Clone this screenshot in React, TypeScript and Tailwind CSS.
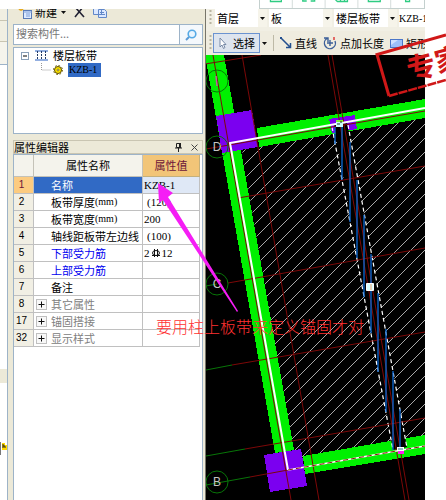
import React from 'react';

interface PropertyRow {
  id: number;
  name: string;
  unit?: string;
  value: string;
  kind?: 'selected' | 'rebar' | 'group';
}

const ROWS: PropertyRow[] = [
  { id: 1, name: '名称', value: 'KZB-1', kind: 'selected' },
  { id: 2, name: '板带厚度', unit: '(mm)', value: '(120)' },
  { id: 3, name: '板带宽度', unit: '(mm)', value: '200' },
  { id: 4, name: '轴线距板带左边线', value: '(100)' },
  { id: 5, name: '下部受力筋', value: '2⏀12', kind: 'rebar' },
  { id: 6, name: '上部受力筋', value: '', kind: 'rebar' },
  { id: 7, name: '备注', value: '' },
  { id: 8, name: '其它属性', value: '', kind: 'group' },
  { id: 17, name: '锚固搭接', value: '', kind: 'group' },
  { id: 32, name: '显示样式', value: '', kind: 'group' },
];

const AXES = [
  { label: '', y: 81 },
  { label: 'D', y: 147 },
  { label: 'C', y: 284 },
  { label: 'B', y: 482 },
];

// x, top, bottom of the rebar lines inside the strip
const STRIP_LINES = [
  [335, 127, 144],
  [342, 125, 180],
  [350, 142, 222],
  [357, 180, 258],
  [364, 215, 297],
  [371, 254, 333],
  [378, 293, 372],
  [386, 329, 412],
  [393, 371, 450],
  [400, 409, 447],
];

const HATCH = Array.from({ length: 36 }, (_, i) => 381 + i * 14);

const Caret = () => (
  <svg viewBox="0 0 5 3" className="w-[5px] h-[3px] shrink-0 pointer-events-none">
    <path d="M0 0h5L2.5 3z" fill="#111" />
  </svg>
);

const Grip = () => (
  <svg viewBox="0 0 3 16" className="w-[3px] h-4 shrink-0">
    <path d="M1.5 0v16" stroke="#b9b5a2" strokeWidth="2" strokeDasharray="2 2" />
  </svg>
);

const Combo: React.FC<{ label: string; value: string; className: string }> = ({ label, value, className }) => (
  <div className={`relative h-[18px] ${className}`}>
    <select aria-label={label} className="appearance-none block w-full h-full bg-white pl-[2px] leading-[18px] outline-none">
      <option>{value}</option>
    </select>
    <span className="absolute right-0 inset-y-0 w-[9px] bg-[#f6f4ea] flex items-center justify-center pointer-events-none">
      <Caret />
    </span>
  </div>
);

const TopIcons = () => (
  <div className="absolute top-0 left-[259px] right-[21px] h-[9px] bg-white border-b border-l border-r border-[#c4d0ce]">
    <svg viewBox="260 0 165 8" className="block w-full h-full" fill="none" stroke="#2ecc82" strokeWidth="1.3">
      <path d="M270.500 0v1.500h11V0M303 0v1h4M315 0v1h-4M336 0l2 1.500h10V0M341 0v1.500M345 0v1.500M369 0v1.500h12V0M406.500 0v1.500h4V0" />
      <path d="M292.500 0v8M325.500 0v8M358.500 0v8M391.500 0v8" stroke="#d5dddb" strokeWidth="1" />
    </svg>
  </div>
);

const LeftEdge = () => (
  <div className="w-2 shrink-0 flex flex-col bg-white border-r border-[#9db3c8]">
    <div className="h-3 bg-[#f1efe2] border-b border-[#c9c5b2]" />
    <div className="h-[21px] bg-[#f1efe2] border-b border-[#c9c5b2]" />
    <div className="h-[23px] bg-[#f5f4ec] border-b border-[#9db3c8]" />
    <div className="h-[304px]" />
    <div className="h-[14px] bg-[#ece9d8]" />
    <div className="h-[58px]" />
    <svg viewBox="0 0 7 14" className="block w-[7px] h-[14px]">
      <path d="M0 1h1v13H0z" fill="#777" />
      <path d="M2 2h3v2h2v5H2z" fill="#ffd800" />
      <path d="M3 3v4M3 5h2v2" stroke="#222" fill="none" />
    </svg>
  </div>
);

const ComponentTree = () => (
  <>
    <div className="h-4 pl-1 overflow-hidden">
      <div className="h-[6px] flex items-center">
        <button type="button" className="flex items-center whitespace-nowrap">
          <svg viewBox="0 0 16 16" className="w-4 h-4 mr-[2px]">
            <path d="M4 1v6M1 4h6M2 2l4 4M6 2l-4 4" stroke="#e5a920" strokeWidth="1.500" />
            <rect x="6.500" y="6.500" width="8" height="8" fill="#dceaff" stroke="#5a7bb5" />
            <path d="M6 8h9M9 10h4M9 12h4" stroke="#7d9ed8" />
          </svg>
          新建
          <span className="ml-1"><Caret /></span>
        </button>
        <button type="button" aria-label="删除" className="ml-2">
          <svg viewBox="0 0 11 12" className="w-[11px] h-3 block">
            <path d="M1 1l9 10M9 1L1 11" stroke="#223" strokeWidth="1.600" />
          </svg>
        </button>
        <button type="button" aria-label="复制" className="ml-2">
          <svg viewBox="0 0 14 12" className="w-[14px] h-3 block">
            <path d="M.500 .500h8v8h-8zM5.500 3.500h6l2 2v6h-8z" fill="#dbe8ff" stroke="#6288c8" />
            <path d="M7 6.500h4M7 8.500h5" stroke="#6288c8" />
          </svg>
        </button>
      </div>
    </div>

    <div className="h-[21px] mt-[-1px] flex bg-white border border-[#9db3c8]">
      <input type="text" aria-label="搜索构件" placeholder="搜索构件..." className="flex-1 min-w-0 pl-[2px] pb-[2px] outline-none placeholder:text-[#777]" />
      <button type="button" aria-label="搜索" className="w-[23px] flex items-center justify-center border-l border-[#9db3c8] bg-[#f4f8fc]">
        <svg viewBox="0 0 12 12" className="w-3 h-3" fill="none">
          <path d="M1 11l3-3" stroke="#5b9bd5" strokeWidth="2" />
          <circle cx="7" cy="5" r="3.800" fill="#e8f5ff" stroke="#55a9e5" strokeWidth="1.600" />
        </svg>
      </button>
    </div>

    <div className="h-[87px] mt-[2px] pl-[7px] bg-white border border-[#9db3c8]">
      <div className="h-[15px] flex items-center">
        <svg viewBox="0 0 8 8" className="w-2 h-2 mr-[6px]">
          <rect x=".500" y=".500" width="7" height="7" fill="#fff" stroke="#8aa0b8" />
          <path d="M2 4h4" stroke="#000" />
        </svg>
        <svg viewBox="0 0 13 11" className="w-[13px] h-[11px] mr-[5px]">
          <path d="M0 1h13M0 10h13" stroke="#7095d6" strokeWidth="1.500" />
          <path d="M2.500 1v9M6.500 1v9M10.500 1v9" stroke="#223a66" strokeDasharray="2 1" />
        </svg>
        楼层板带
      </div>
      <div className="h-[14px] pl-5 flex items-center">
        <svg viewBox="0 0 22 14" className="w-[22px] h-[14px] mr-[5px]" fill="none">
          <path d="M.500 0v7H10" stroke="#999" strokeDasharray="1 1" />
          <circle cx="17" cy="7" r="3.500" fill="#ffe600" stroke="#5a4a00" />
          <circle cx="17" cy="7" r="4.500" stroke="#6b5b00" strokeDasharray="1.700 1.830" />
          <circle cx="17" cy="7" r="1" fill="#fff" stroke="#5a4a00" strokeWidth=".700" />
        </svg>
        <span className="w-[33px] h-[14px] leading-[14px] pl-[1px] bg-[#316ac5] font-['Liberation_Serif'] text-[10px]">KZB-1</span>
      </div>
    </div>
  </>
);

const PropertyEditor = () => (
  <>
    <div className="h-[14px] mt-[6px] pr-1 flex items-center border border-[#c9c5b2] bg-[#ece9d8] leading-3">
      <h2 className="flex-1">属性编辑器</h2>
      <button type="button" aria-label="固定" className="mr-[9px]">
        <svg viewBox="0 0 7 9" className="block w-[7px] h-[9px]" fill="none" stroke="#222">
          <path d="M1.500 .500h3v4h-3zM0 5h7M3.500 5v4" />
          <path d="M5 0v5" strokeWidth="2" />
        </svg>
      </button>
      <button type="button" aria-label="关闭">
        <svg viewBox="0 0 7 7" className="block w-[7px] h-[7px]" stroke="#444">
          <path d="M.500 .500l6 6M6.500 .500l-6 6" />
        </svg>
      </button>
    </div>
    <div className="flex-1 bg-white border-x border-t border-[#9db3c8] pr-[2px]">
      <table className="w-full table-fixed border-separate border-spacing-0">
        <colgroup>
          <col className="w-5" />
          <col className="w-[109px]" />
          <col />
        </colgroup>
        <thead>
          <tr className="h-[22px]">
            <th className="border-r border-b border-[#c4c2b8] bg-[#f4f3ec] p-0" />
            <th className="border-r border-b border-[#c4c2b8] bg-[#f4f3ec] p-0 font-normal">属性名称</th>
            <th className="border-r border-b border-[#c4b07c] bg-[#f2c578] p-0 font-normal text-[#6b1438]">属性值</th>
          </tr>
        </thead>
        <tbody>
          {ROWS.map(({ id, name, unit, value, kind }) => {
            const selected = kind === 'selected';
            let color = 'text-black';
            if (selected) color = 'bg-[#316ac5] text-white';
            if (kind === 'rebar') color = 'text-[#0000f0]';
            if (kind === 'group') color = 'text-[#808080]';
            return (
              <tr key={id} className="h-[17px] leading-4">
                <td className={`border-r border-b border-[#c0c0c0] p-0 pr-1 text-center font-['Liberation_Sans'] text-[10px] ${selected ? 'bg-[#fccb80] text-[#6b1438]' : 'bg-[#f1efe4]'}`}>{id}</td>
                <td className={`border-r border-b border-[#c0c0c0] p-0 whitespace-nowrap ${color}`}>
                  <div className="flex items-center h-4">
                    <span className="w-[17px] shrink-0 pl-[2px]">
                      {kind === 'group' && (
                        <button type="button" aria-label={name} className="block">
                          <svg viewBox="0 0 11 11" className="block w-[11px] h-[11px]">
                            <rect x=".500" y=".500" width="10" height="10" fill="#f8f8f8" stroke="#c0c0c0" />
                            <path d="M2.500 5.500h6M5.500 2.500v6" stroke="#111" />
                          </svg>
                        </button>
                      )}
                    </span>
                    {name}
                    {unit && <span className="font-['Liberation_Serif'] text-[10px]">{unit}</span>}
                  </div>
                </td>
                <td className={`border-r border-b border-[#c0c0c0] p-0 font-['Liberation_Serif'] text-[11px] whitespace-nowrap ${selected ? 'bg-[#dfe8f6] text-[10px]' : ''}`}>
                  <div className={`h-4 flex items-center ${value.startsWith('(') ? 'pl-1' : 'pl-[1px]'}`}>
                    {id === 5 ? (
                      <>
                        <span>2</span>
                        <svg viewBox="0 0 10 10" className="w-[10px] h-[10px] mx-[1px]" fill="none" stroke="#111">
                          <ellipse cx="5" cy="5" rx="3.500" ry="2.500" />
                          <path d="M3.500 1v8M6.500 1v8M1 7.500h8" />
                        </svg>
                        <span>12</span>
                      </>
                    ) : value}
                  </div>
                </td>
              </tr>
            );
          })}
        </tbody>
      </table>
    </div>
  </>
);

const Toolbars = () => (
  <div className="h-[46px] shrink-0 overflow-hidden bg-[#ece9d8]">
    <div className="h-[22px] flex items-center gap-[2px] pl-[3px] pb-1 bg-[#f1efe4]">
      <div className="w-[3px] mr-[1px]"><Grip /></div>
      <Combo label="楼层" value="首层" className="w-[52px] shrink-0" />
      <Combo label="构件类别" value="板" className="w-[63px] shrink-0" />
      <Combo label="构件类型" value="楼层板带" className="w-[63px] shrink-0" />
      <input aria-label="构件名称" defaultValue="KZB-1" className="flex-1 min-w-0 h-[18px] bg-white font-['Liberation_Serif'] text-[10px]" />
    </div>
    <div className="h-6 pl-[3px] flex items-center whitespace-nowrap bg-[#efecdf]">
      <Grip />
      <button type="button" className="ml-[1px] w-[47px] h-5 shrink-0 flex items-center justify-end pr-1 gap-[6px] border border-[#6b93d0] bg-[#dde4ee]">
        <svg viewBox="0 0 8 12" className="w-2 h-3">
          <path d="M1 1v9l2-2 1.500 3.500 1.500-1L4.500 7.500H7z" fill="#fff" stroke="#6b7f9e" strokeWidth=".900" />
        </svg>
        选择
      </button>
      <button type="button" aria-label="选择方式" className="ml-[2px]"><Caret /></button>
      <span className="w-px h-4 ml-[6px] shrink-0 bg-[#bdb9a6]" />
      <button type="button" className="ml-[6px] shrink-0 flex items-center gap-[3px]">
        <svg viewBox="0 0 12 12" className="w-3 h-3" fill="none">
          <path d="M1 1l9 9M10.500 6v4.500H6" stroke="#234f8f" strokeWidth="1.500" />
          <path d="M0 0h2v2H0z" fill="#234f8f" />
        </svg>
        直线
      </button>
      <button type="button" className="ml-[6px] shrink-0 flex items-center gap-[3px]">
        <svg viewBox="0 0 14 14" className="w-[14px] h-[14px]" fill="none" stroke="#3c5f99" strokeWidth="1.400">
          <path d="M4 2.500A5.500 5.500 0 1 0 12 5M1 2h4v4M7 4v6M4 7h6" />
          <path d="M11 1v3" stroke="#d33" />
        </svg>
        点加长度
      </button>
      <button type="button" className="ml-[6px] shrink-0 flex items-center gap-[3px]">
        <svg viewBox="0 0 13 9" className="w-[13px] h-[9px]">
          <rect x=".500" y=".500" width="12" height="8" fill="#9cc0fa" stroke="#4a76c8" />
          <path d="M1 1h7L1 6z" fill="#cfe1ff" />
        </svg>
        矩形
      </button>
    </div>
  </div>
);

const DrawingArea = () => (
  <svg viewBox="206 55 219 445" preserveAspectRatio="xMinYMin slice" className="block w-full flex-1 min-h-0 bg-black" fill="none">
    <defs>
      <clipPath id="slab">
        <path d="M242 150L425 118V436L302 457L292 449z" />
      </clipPath>
    </defs>

    <g clipPath="url(#slab)" stroke="#a8a8a8" strokeWidth="1">
      {HATCH.map(sum => (
        <path key={sum} d={`M${sum - 500} 500L${sum - 100} 100`} />
      ))}
    </g>

    <g fill="#00f000" shapeRendering="crispEdges">
      <path d="M205 55H224L294 450L275 453z" />
      <path d="M257 128L425 99V118L259 147z" />
      <path d="M303 456L425 435V454L305 474z" />
    </g>
    <g fill="#7b00f0" shapeRendering="crispEdges">
      <path d="M216 116L252 110L258 147L222 153z" />
      <path d="M264 455L301 449L307 486L270 492z" />
      <path d="M329 119L355 115L357 129L332 133z" />
    </g>

    <path d="M334 125L347 123L407 447L393 450z" fill="#000" />
    <path d="M332 127L393 450M348 125L407 448" stroke="#fff" strokeWidth="1.200" strokeDasharray="4 3" />

    <g stroke="#7c0808" strokeWidth="1">
      <path d="M213 55L291 500M242 55L319 500M328 55L405 500M332 55L409 500" />
      <path d="M205 64L261 55M206 149L425 111M238 198L425 166M228 283L425 248M232 365L425 332M245 449L425 418M250 477L288 470" />
    </g>
    <g stroke="#0a6ad8" strokeWidth="1.300">
      {STRIP_LINES.map(([x, top, bottom]) => (
        <path key={x} d={`M${x} ${top}V${bottom}`} />
      ))}
    </g>
    <path d="M206 370L232 365M206 456L245 449M206 485L250 477M206 286L217 284" stroke="#087508" />

    <path d="M288 470L230 143L425 108" stroke="#fff" strokeWidth="2" />
    <path d="M288 470L425 446" stroke="#fff" strokeWidth="1.500" />
    <path d="M288 470L425 446" stroke="#8c1010" strokeDasharray="5 3" />

    {AXES.map(({ label, y }) => (
      <g key={y}>
        <circle cx="217" cy={y} r="11" stroke="#087508" />
        <text x="217" y={y + 4} textAnchor="middle" fill="#c4c4c4" className="font-['Liberation_Sans'] text-[12px]">{label}</text>
      </g>
    ))}
    <path d="M216 76l1 10" stroke="#c060a0" strokeWidth="1.500" />

    <path d="M336 120h7v7h-7z" fill="#c8ffff" />
    <path d="M336 120h7v2h-7z" fill="#80f030" />
    <path d="M337 124h3M340 122h2" stroke="#222" />
    <path d="M366.500 283.500h7v7h-7z" fill="#d8ffff" stroke="#fff" />
    <path d="M371 284v6" stroke="#f0a070" />
    <path d="M397 447h7v4h-7z" fill="#fff" />
    <path d="M398 451h6v3h-6z" fill="#ff20f0" />
    <path d="M398 449h5" stroke="#208090" />
  </svg>
);

const Annotation = () => (
  <div className="absolute top-[182px] left-[156px] text-[#ff3131] text-base leading-6 whitespace-nowrap pointer-events-none">
    <svg viewBox="156 182 84 132" className="block w-[84px] h-[132px]">
      <path d="M158 183L173 193L168 197L238 311L237 312L163 200L159 203z" fill="#f51df5" />
    </svg>
    <p className="font-light">要用柱上板带来定义锚固才对</p>
  </div>
);

const Stamp = () => (
  <svg viewBox="374 30 72 70" className="absolute top-[30px] right-0 w-[72px] h-[70px] pointer-events-none" fill="none">
    <path d="M446 35L377 54.500L389 96" stroke="#d01818" strokeWidth="3" />
    <path d="M389 96L446 80" stroke="#d01818" strokeWidth="2.500" strokeDasharray="9 1" />
    <text transform="translate(410 81) rotate(-15)" fill="#d01818" className="text-[29px] font-bold">专家</text>
  </svg>
);

const App: React.FC = () => (
  <div className="relative min-h-screen flex pt-[9px] pr-[21px] overflow-hidden bg-white text-[11px] text-black font-['Noto_Sans_CJK_SC',sans-serif]">
    <TopIcons />
    <LeftEdge />
    <aside className="w-[197px] shrink-0 flex flex-col pl-[5px] pr-[2px] bg-[#ece9d8]">
      <ComponentTree />
      <PropertyEditor />
    </aside>
    <main className="flex-1 min-w-0 flex flex-col border-l border-[#77756a]">
      <Toolbars />
      <DrawingArea />
    </main>
    <Annotation />
    <Stamp />
  </div>
);

export default App;
